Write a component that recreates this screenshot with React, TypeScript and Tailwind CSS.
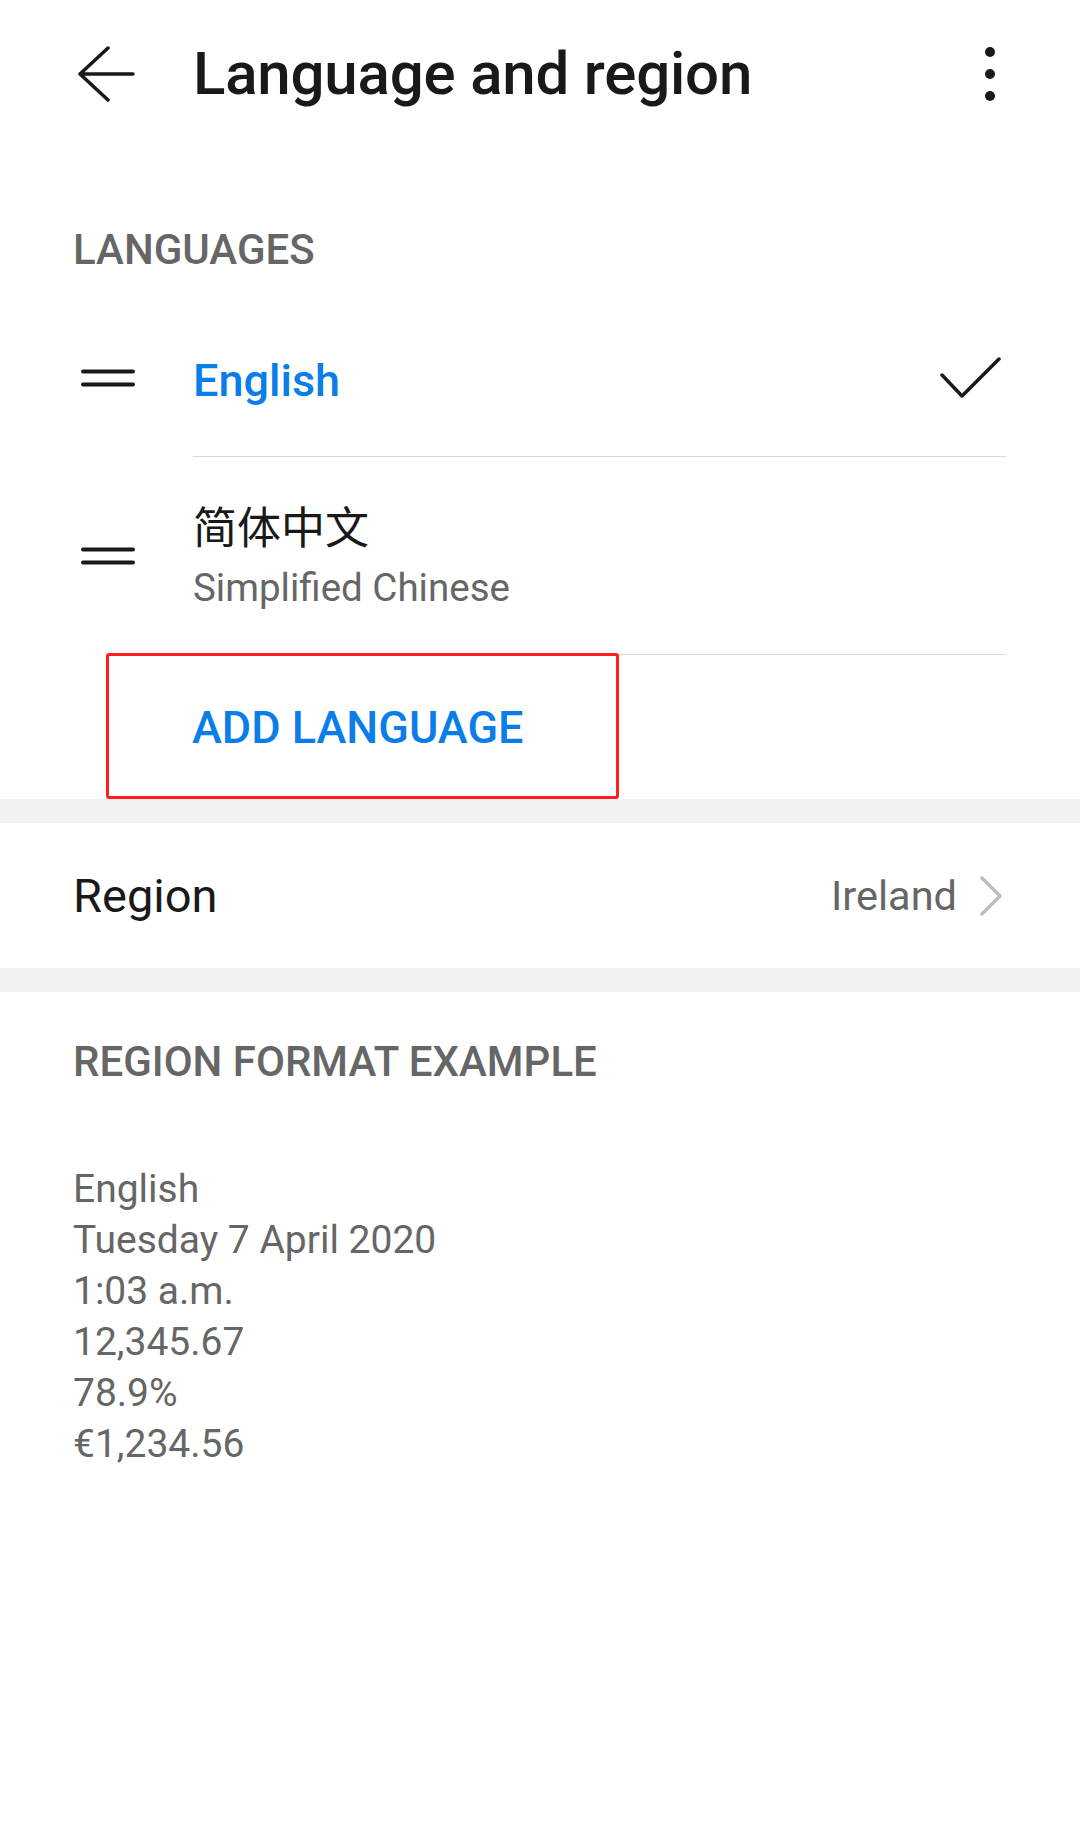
const font = "font-['Roboto','Noto_Sans_CJK_SC',sans-serif]";

function BackArrow() {
    return (
        <svg width="58" height="58" viewBox="0 0 58 58" fill="none" stroke="#191919" strokeWidth="3.5" strokeLinecap="round" strokeLinejoin="round">
            <path d="M30 3 L2 29 L30 55 M2 29 H55" />
        </svg>
    );
}

function Kebab() {
    return (
        <div className="flex h-[54px] w-[12px] flex-col items-center justify-between">
            <span className="h-[10px] w-[10px] rounded-full bg-[#191919]" />
            <span className="h-[10px] w-[10px] rounded-full bg-[#191919]" />
            <span className="h-[10px] w-[10px] rounded-full bg-[#191919]" />
        </div>
    );
}

function DragHandle() {
    return (
        <svg width="56" height="20" viewBox="0 0 56 20" fill="none" stroke="#191919" strokeWidth="4" strokeLinecap="round">
            <path d="M3 3.5 H53 M3 16.5 H53" />
        </svg>
    );
}

function Check() {
    return (
        <svg width="62" height="44" viewBox="0 0 62 44" fill="none" stroke="#191919" strokeWidth="3.5" strokeLinecap="round" strokeLinejoin="round">
            <path d="M2 19 L22 40 L59 3" />
        </svg>
    );
}

function Chevron() {
    return (
        <svg width="24" height="40" viewBox="0 0 24 40" fill="none" stroke="#bdbdbd" strokeWidth="3.5" strokeLinecap="round" strokeLinejoin="round">
            <path d="M3 2 L21 20 L3 38" />
        </svg>
    );
}

const examples = ['English', 'Tuesday 7 April 2020', '1:03 a.m.', '12,345.67', '78.9%', '€1,234.56'];

export default function App() {
    return (
        <div className={`${font} min-h-[1834px] w-[1080px] bg-white text-[#191919]`}>
            {/* header */}
            <div className="flex h-[148px] items-center pl-[78px] pr-[84px]">
                <BackArrow />
                <h1 className="ml-[57px] flex-1 text-[60px] font-medium leading-none tracking-[-0.2px]">Language and region</h1>
                <Kebab />
            </div>

            {/* languages */}
            <div className="flex h-[152px] items-center pl-[73px] pt-[52px]">
                <h2 className="text-[42px] font-medium leading-none text-[#666666]">LANGUAGES</h2>
            </div>

            <div className="flex h-[156px] items-center pl-[80px] pr-[78px]">
                <DragHandle />
                <span className="ml-[57px] mt-[4px] flex-1 text-[45px] font-medium leading-none text-[#0a7de8]">English</span>
                <Check />
            </div>
            <div className="ml-[193px] mr-[74px] h-px bg-[#d9d9d9]" />

            <div className="flex h-[197px] items-center pl-[80px]">
                <DragHandle />
                <div className="ml-[57px] mt-[4px] flex flex-col gap-[18px]">
                    <span className="text-[44px] leading-none">简体中文</span>
                    <span className="text-[38.5px] leading-none text-[#666666]">Simplified Chinese</span>
                </div>
            </div>
            <div className="ml-[193px] mr-[74px] h-px bg-[#d9d9d9]" />

            <div className="relative flex h-[144px] items-center pl-[192px]">
                <span className="text-[45px] font-medium leading-none text-[#0a7de8]">ADD LANGUAGE</span>
                <div className="absolute left-[106px] top-[-2px] h-[146px] w-[513px] rounded-[3px] border-[3px] border-[#ff1f1f]" />
            </div>

            <div className="h-[24px] bg-[#f2f2f2]" />

            {/* region */}
            <div className="flex h-[145px] items-center pl-[73px] pr-[77px]">
                <span className="flex-1 text-[47px] leading-none">Region</span>
                <span className="text-[41.5px] leading-none text-[#666666]">Ireland</span>
                <span className="ml-[22px] flex">
                    <Chevron />
                </span>
            </div>

            <div className="h-[24px] bg-[#f2f2f2]" />

            {/* format example */}
            <div className="flex h-[140px] items-center pl-[73px]">
                <h2 className="text-[42px] font-medium leading-none text-[#666666]">REGION FORMAT EXAMPLE</h2>
            </div>

            <div className="flex flex-col pl-[73px] pt-[32px]">
                {examples.map((line) => (
                    <span key={line} className="h-[51px] text-[39px] leading-[51px] text-[#666666]">
                        {line}
                    </span>
                ))}
            </div>
        </div>
    );
}
